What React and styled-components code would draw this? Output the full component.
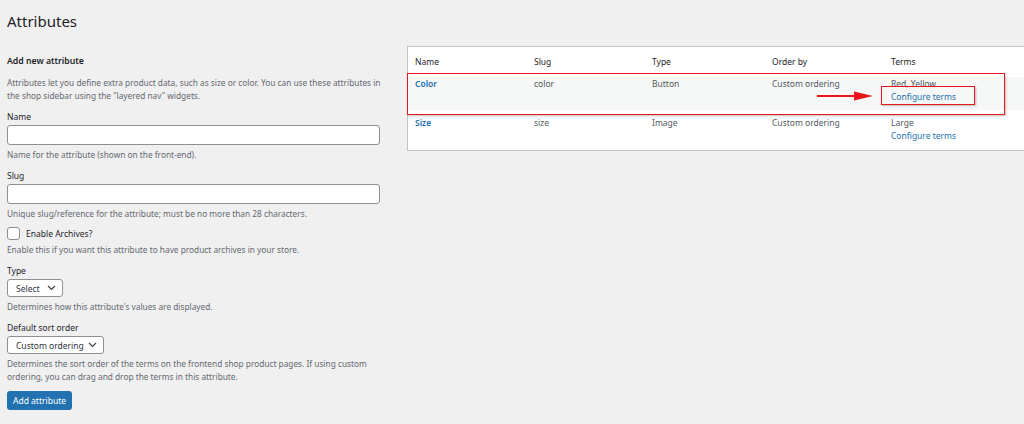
import React from "react";
import styled, { createGlobalStyle } from "styled-components";

const Global = createGlobalStyle`
  html, body { margin: 0; padding: 0; background: #f0f0f1; }
  body { font-family: "Noto Sans", "Open Sans", sans-serif; font-size: 8.5px; color: #3c434a; }
`;

const Page = styled.div`
  width: 1024px; height: 424px; overflow: hidden; box-sizing: border-box;
  padding: 10px 0 0 7px; position: relative;
`;
const Title = styled.h1`
  margin: 0 0 13px; font-size: 15px; font-weight: 400; color: #1d2327; line-height: 22px;
`;
const Cols = styled.div`display: flex; gap: 12px; align-items: flex-start;`;
const Left = styled.div`width: 388px; flex-shrink: 0; display: flex; flex-direction: column; padding-top: 10px;`;
const H2 = styled.h2`margin: 0 0 7px; font-size: 8.7px; font-weight: 600; color: #1d2327; line-height: 12px;`;
const Help = styled.p`margin: ${p => p.$mt || 2}px 0 0; font-size: 8.3px; line-height: 13px; color: #646970;`;
const Field = styled.div`margin-top: ${p => p.$mt || 10}px; display: flex; flex-direction: column;`;
const Label = styled.label`font-size: 8.5px; color: #1d2327; line-height: 12px; margin-bottom: 2px;`;
const Input = styled.div`
  width: 371px; height: 18px; background: #fff; border: 1px solid #8c8f94; border-radius: 3px;
`;
const Select = styled.div`
  width: ${p => p.$w}px; height: 18px; background: #fff; border: 1px solid #8c8f94;
  border-radius: 3px; display: flex; align-items: center; justify-content: space-between;
  padding: 0 6px 0 8px; box-sizing: border-box; font-size: 8.5px; color: #2c3338;
`;
const CheckRow = styled.div`display: flex; align-items: center; gap: 6px; margin-top: 7px; color: #1d2327;`;
const Box = styled.span`width: 11px; height: 11px; border: 1px solid #8c8f94; border-radius: 3px; background: #fff;`;
const Button = styled.div`
  margin-top: 8px; width: 65px; height: 19px; background: #2271b1; color: #fff; border-radius: 3px;
  display: flex; align-items: center; justify-content: center; font-size: 8.5px;
`;
const Table = styled.div`
  margin-top: 1px; flex: 0 0 640px; background: #fff; border: 1px solid #c3c4c7; padding-bottom: 8px;
`;
const Row = styled.div`
  display: grid; grid-template-columns: 119px 118px 120px 119px 1fr; padding: 0 7px;
  min-height: ${p => p.$h}px; background: ${p => p.$bg || "#fff"};
  align-items: ${p => p.$center ? "center" : "start"}; line-height: 12.5px;
  padding-top: ${p => p.$pt || 0}px; box-sizing: border-box;
`;
const Cell = styled.div`color: ${p => p.$c || "#50575e"}; font-weight: ${p => p.$b ? 600 : 400};`;
const Link = styled.div`color: #2271b1;`;
const RedBox = styled.div`
  position: absolute; border: 1.5px solid #e8161b; box-shadow: 1px 1px 2px rgba(0,0,0,0.25);
`;
const Chevron = () => (
  <svg width="9" height="6" viewBox="0 0 9 6"><path d="M1 1l3.5 3.5L8 1" fill="none" stroke="#3c434a" strokeWidth="1.2"/></svg>
);

export default function App() {
  return (
    <Page>
      <Global />
      <Title>Attributes</Title>
      <Cols>
        <Left>
          <H2>Add new attribute</H2>
          <Help $mt={0}>Attributes let you define extra product data, such as size or color. You can use these attributes in the shop sidebar using the "layered nav" widgets.</Help>
          <Field $mt={9}><Label>Name</Label><Input /></Field>
          <Help $mt={3}>Name for the attribute (shown on the front-end).</Help>
          <Field $mt={9}><Label>Slug</Label><Input /></Field>
          <Help $mt={3}>Unique slug/reference for the attribute; must be no more than 28 characters.</Help>
          <CheckRow><Box />Enable Archives?</CheckRow>
          <Help $mt={3}>Enable this if you want this attribute to have product archives in your store.</Help>
          <Field $mt={9}><Label>Type</Label><Select $w={56}>Select<Chevron /></Select></Field>
          <Help $mt={3}>Determines how this attribute's values are displayed.</Help>
          <Field $mt={9}><Label>Default sort order</Label><Select $w={97}>Custom ordering<Chevron /></Select></Field>
          <Help $mt={3}>Determines the sort order of the terms on the frontend shop product pages. If using custom ordering, you can drag and drop the terms in this attribute.</Help>
          <Button>Add attribute</Button>
        </Left>
        <Table>
          <Row $h={30} $center>
            <Cell $c="#1d2327">Name</Cell><Cell $c="#1d2327">Slug</Cell><Cell $c="#1d2327">Type</Cell><Cell $c="#1d2327">Order by</Cell><Cell $c="#1d2327">Terms</Cell>
          </Row>
          <Row $h={33} $bg="#f6f7f7" $pt={1}>
            <Cell $c="#2271b1" $b>Color</Cell><Cell>color</Cell><Cell>Button</Cell><Cell>Custom ordering</Cell>
            <Cell>Red, Yellow<Link>Configure terms</Link></Cell>
          </Row>
          <Row $h={30} $pt={7}>
            <Cell $c="#2271b1" $b>Size</Cell><Cell>size</Cell><Cell>Image</Cell><Cell>Custom ordering</Cell>
            <Cell>Large<Link>Configure terms</Link></Cell>
          </Row>
        </Table>
      </Cols>
      <RedBox style={{ left: 407, top: 73, width: 596, height: 40 }} />
      <RedBox style={{ left: 881, top: 86, width: 92, height: 17 }} />
      <svg style={{ position: "absolute", left: 816, top: 91 }} width="58" height="10" viewBox="0 0 58 10">
        <path d="M1 5h40" stroke="#e8161b" strokeWidth="2.2" />
        <path d="M38 0.5L57 5L38 9.5z" fill="#e8161b" />
      </svg>
    </Page>
  );
}
